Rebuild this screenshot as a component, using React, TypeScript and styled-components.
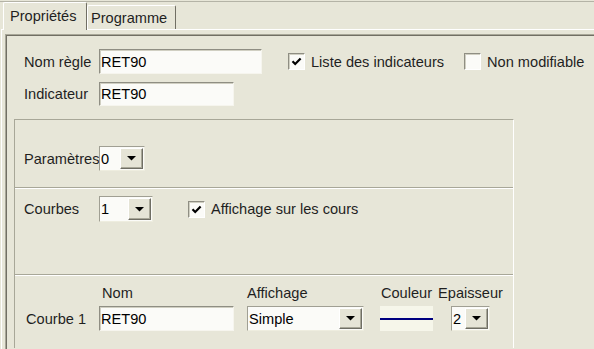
import React from "react";
import styled, { createGlobalStyle } from "styled-components";

const GlobalStyle = createGlobalStyle`
  html, body {
    margin: 0;
    padding: 0;
  }
  body {
    width: 594px;
    height: 349px;
    overflow: hidden;
    background: #e7e6d8;
    font-family: "Liberation Sans", Arial, sans-serif;
    font-size: 14.6px;
    color: #1f1f1f;
  }
`;

const Page = styled.div`
  padding-top: 1px;
`;

const TabStrip = styled.div`
  display: flex;
  align-items: flex-end;
  height: 27px;
  padding-left: 3px;
  border-top: 1px solid #b4b3a6;
`;

const Tab = styled.div<{ active?: boolean; width: number }>`
  position: relative;
  z-index: 1;
  box-sizing: border-box;
  width: ${(p) => p.width}px;
  height: ${(p) => (p.active ? 28 : 24)}px;
  margin-bottom: ${(p) => (p.active ? -1 : 0)}px;
  display: flex;
  align-items: center;
  padding-left: ${(p) => (p.active ? 6 : 3)}px;
  padding-bottom: ${(p) => (p.active ? 1 : 0)}px;
  background: #e7e6d8;
  border-top: 1px solid #ffffff;
  border-left: 1px solid #ffffff;
  border-right: 1px solid #716f64;
  border-radius: 2px 2px 0 0;
  white-space: nowrap;
`;

const TabPage = styled.div`
  margin-left: 1px;
  padding: 4px 0 0 3px;
  border-top: 1px solid #ffffff;
  border-left: 1px solid #ffffff;
`;

const Frame = styled.div`
  box-sizing: border-box;
  height: 315px;
  overflow: hidden;
  padding: 14px 0 0 8px;
  border-top: 1px solid #a8a798;
  border-left: 1px solid #a8a798;
  box-shadow: inset 1px 1px 0 #716f64;
`;

const FieldRow = styled.div<{ gapTop?: number }>`
  display: flex;
  align-items: center;
  margin-left: 10px;
  margin-top: ${(p) => p.gapTop || 0}px;
`;

const Label = styled.span<{ width?: number; indent?: number }>`
  display: inline-block;
  width: ${(p) => (p.width ? `${p.width}px` : "auto")};
  padding-left: ${(p) => p.indent || 0}px;
  box-sizing: border-box;
  white-space: nowrap;
`;

const TextBox = styled.input<{ w: number; h: number }>`
  box-sizing: border-box;
  width: ${(p) => p.w}px;
  height: ${(p) => p.h}px;
  margin: 0;
  padding: 0 0 0 1px;
  font: inherit;
  color: #000000;
  background: #fbfbf8;
  border: 1px solid;
  border-color: #8f8e83 #f6f5ee #f6f5ee #8f8e83;
  box-shadow: inset 1px 1px 0 #d0cfc2;
  outline: none;
`;

const CheckWrap = styled.div<{ left: number }>`
  display: flex;
  align-items: center;
  gap: 6px;
  margin-left: ${(p) => p.left}px;
  white-space: nowrap;
`;

const CheckBox = styled.span`
  box-sizing: border-box;
  width: 17px;
  height: 17px;
  display: flex;
  align-items: center;
  justify-content: center;
  background: #fbfbf8;
  border: 1px solid;
  border-color: #8f8e83 #ffffff #ffffff #8f8e83;
  box-shadow: inset 1px 1px 0 #d0cfc2;
`;

const GroupBox = styled.div`
  box-sizing: border-box;
  width: 500px;
  margin-top: 13px;
  border-top: 1px solid #a8a798;
  border-left: 1px solid #a8a798;
  border-right: 1px solid #ffffff;
`;

const Section = styled.div<{ height: number; padTop: number; divided?: boolean }>`
  box-sizing: border-box;
  height: ${(p) => p.height}px;
  padding: ${(p) => p.padTop}px 0 0 9px;
  border-top: ${(p) => (p.divided ? "1px solid #a8a798" : "none")};
  box-shadow: ${(p) => (p.divided ? "inset 0 1px 0 #ffffff" : "none")};
`;

const SectionRow = styled.div`
  display: flex;
  align-items: center;
`;

const SelectBox = styled.div<{ w: number; h: number }>`
  box-sizing: border-box;
  width: ${(p) => p.w}px;
  height: ${(p) => p.h}px;
  display: flex;
  align-items: stretch;
  padding: 1px;
  background: #fbfbf8;
  border: 1px solid;
  border-color: #a09f93 #eeeddf #eeeddf #a09f93;
  color: #000000;
`;

const SelectValue = styled.span`
  flex: 1;
  display: flex;
  align-items: center;
  overflow: hidden;
`;

const DropButton = styled.span`
  box-sizing: border-box;
  width: 23px;
  display: flex;
  align-items: center;
  justify-content: center;
  background: #e5e4d6;
  border: 1px solid;
  border-color: #ffffff #6f6e64 #6f6e64 #ffffff;
  box-shadow: inset -1px -1px 0 #a8a798;
`;

const CurveGrid = styled.div`
  display: grid;
  grid-template-columns: 75px 148px 133px 71px 39px;
  grid-template-rows: 17px 25px;
  row-gap: 5px;
  align-items: center;
`;

const Header = styled.span<{ indent?: number; center?: boolean; span?: number }>`
  display: flex;
  justify-content: ${(p) => (p.center ? "center" : "flex-start")};
  width: ${(p) => (p.span ? `${p.span}px` : "auto")};
  padding-left: ${(p) => p.indent || 0}px;
  white-space: nowrap;
`;

const Swatch = styled.div<{ lineColor: string }>`
  width: 53px;
  height: 25px;
  display: flex;
  align-items: center;
  background: #f6f6ea;

  &::after {
    content: "";
    display: block;
    width: 100%;
    height: 2px;
    background: ${(p) => p.lineColor};
  }
`;

const Arrow = () => (
  <svg width="9" height="5" viewBox="0 0 9 5">
    <polygon points="0,0 9,0 4.5,4.6" fill="#000000" />
  </svg>
);

const Check = () => (
  <svg width="11" height="11" viewBox="0 0 11 11">
    <path d="M1.5 5.2 L4.2 8 L9.6 2.4" fill="none" stroke="#000000" strokeWidth="2.2" />
  </svg>
);

const Select = ({ value, w, h }: { value: string; w: number; h: number }) => (
  <SelectBox w={w} h={h}>
    <SelectValue>{value}</SelectValue>
    <DropButton>
      <Arrow />
    </DropButton>
  </SelectBox>
);

const CheckField = ({ label, checked, left }: { label: string; checked?: boolean; left: number }) => (
  <CheckWrap left={left}>
    <CheckBox>{checked && <Check />}</CheckBox>
    <span>{label}</span>
  </CheckWrap>
);

const App = () => {
  return (
    <Page>
      <GlobalStyle />
      <TabStrip>
        <Tab active width={84}>
          Propriétés
        </Tab>
        <Tab width={89}>Programme</Tab>
      </TabStrip>
      <TabPage>
        <Frame>
          <FieldRow>
            <Label width={75}>Nom règle</Label>
            <TextBox w={163} h={25} value="RET90" readOnly />
            <CheckField label="Liste des indicateurs" checked left={26} />
            <CheckField label="Non modifiable" left={20} />
          </FieldRow>
          <FieldRow gapTop={8}>
            <Label width={75}>Indicateur</Label>
            <TextBox w={135} h={24} value="RET90" readOnly />
          </FieldRow>

          <GroupBox>
            <Section height={67} padTop={26}>
              <SectionRow>
                <Label width={75}>Paramètres</Label>
                <Select value="0" w={46} h={25} />
              </SectionRow>
            </Section>
            <Section divided height={87} padTop={8}>
              <SectionRow>
                <Label width={75}>Courbes</Label>
                <Select value="1" w={54} h={26} />
                <CheckField label="Affichage sur les cours" checked left={35} />
              </SectionRow>
            </Section>
            <Section divided height={74} padTop={9}>
              <CurveGrid>
                <span />
                <Header indent={3}>Nom</Header>
                <Header>Affichage</Header>
                <Header center span={53}>
                  Couleur
                </Header>
                <Header center span={39}>
                  Epaisseur
                </Header>
                <Label indent={2}>Courbe 1</Label>
                <TextBox w={135} h={25} value="RET90" readOnly />
                <Select value="Simple" w={117} h={25} />
                <Swatch lineColor="#000080" />
                <Select value="2" w={39} h={25} />
              </CurveGrid>
            </Section>
          </GroupBox>
        </Frame>
      </TabPage>
    </Page>
  );
};

export default App;
